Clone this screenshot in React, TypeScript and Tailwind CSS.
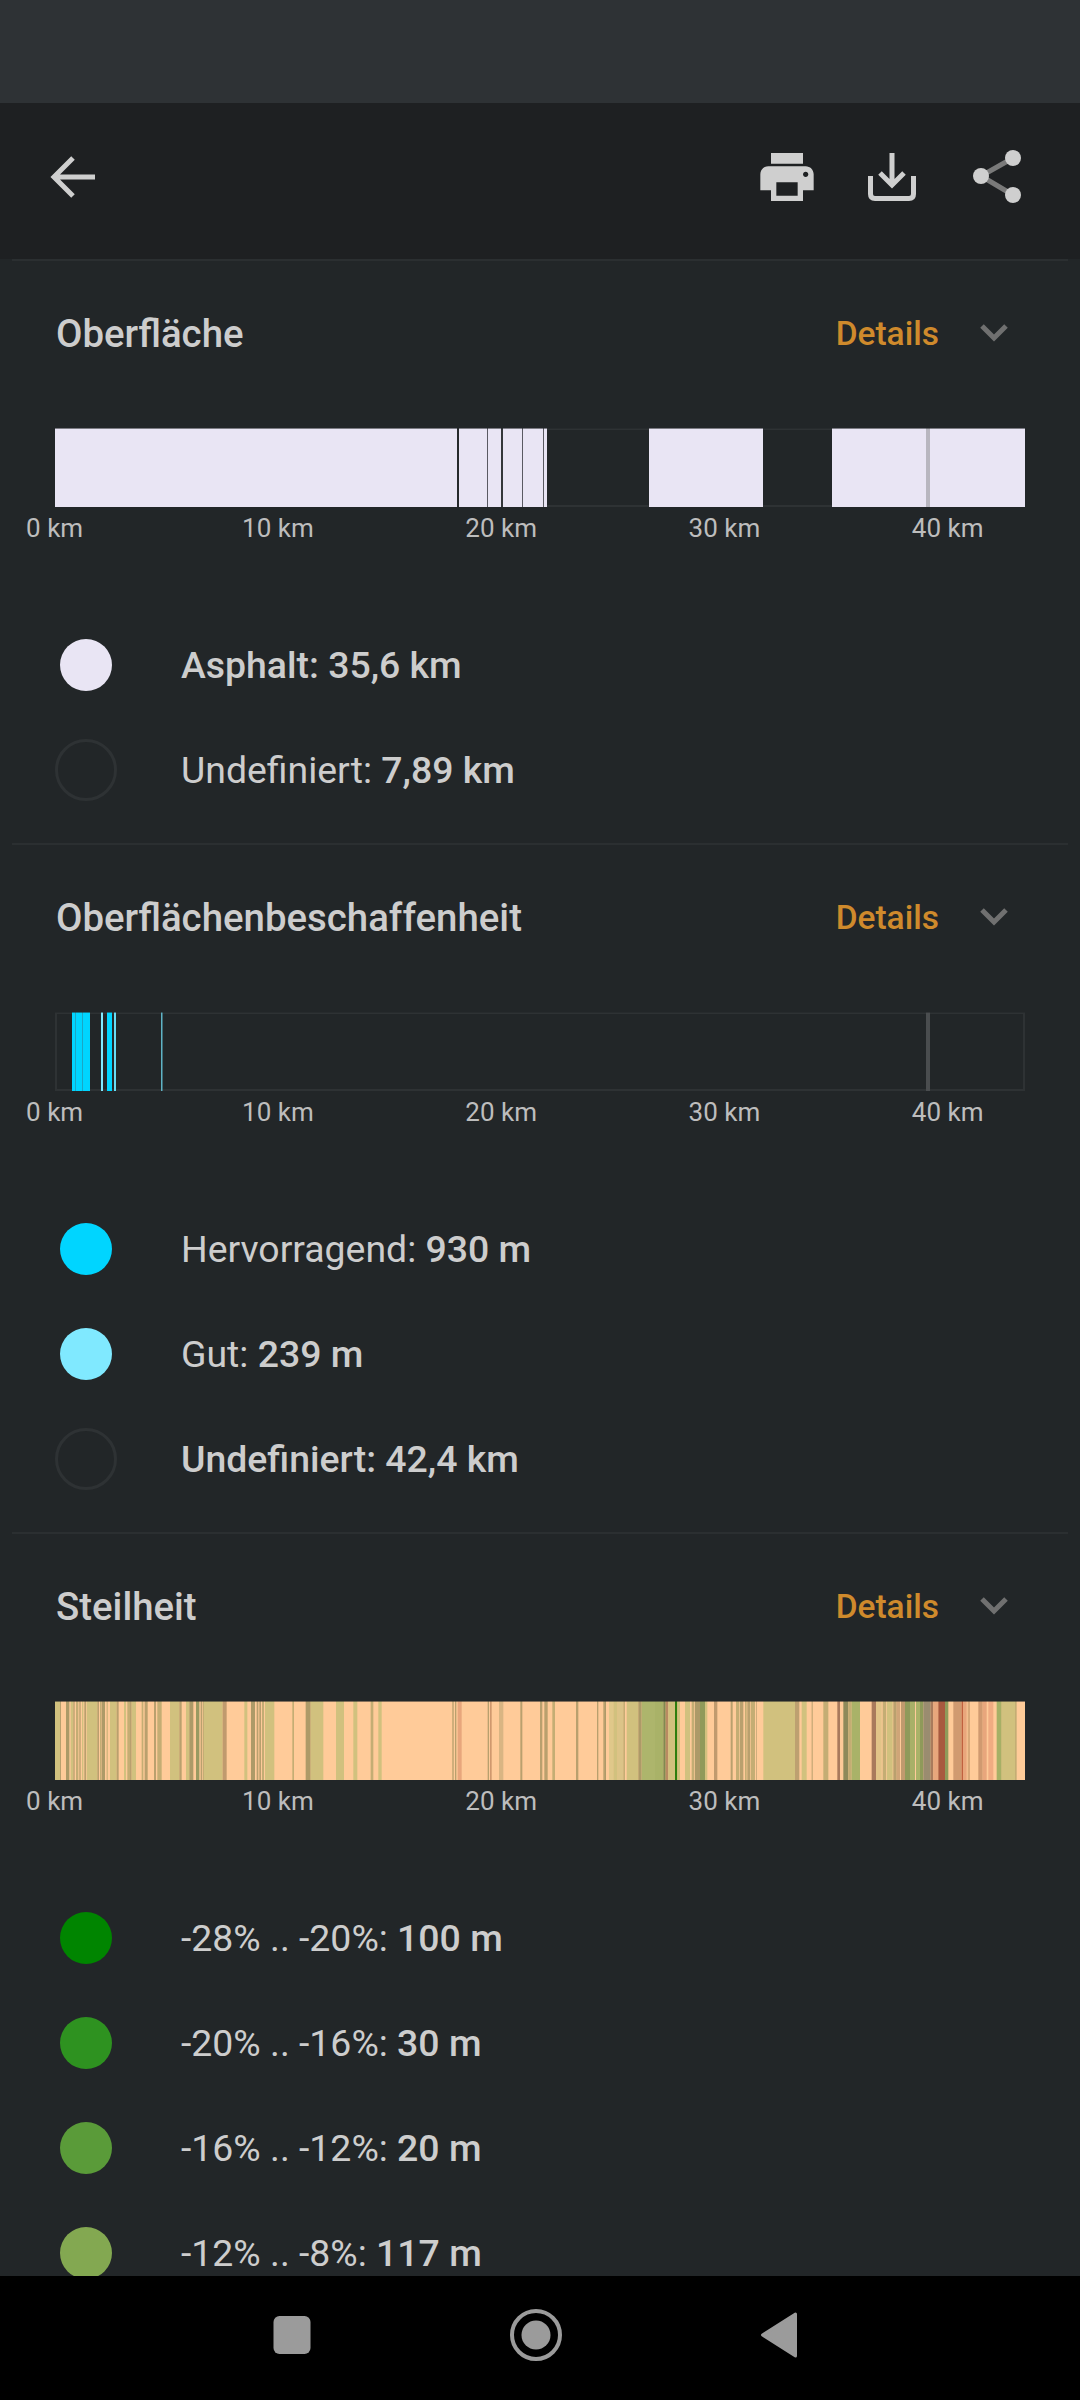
import React from "react";

type Seg = [number, number, string];

const LILAC = "#e9e5f4";
const PEACH = "#ffcb99";
const KHAKI = "#d1c17e";
const TAN = "#b9a06e";
const LTAN = "#c4ad74";
const DTAN = "#ad9a68";
const SALM = "#e8a67c";
const OLIVE = "#a9b268";
const DOLV = "#8f9a5a";
const BROWN = "#a97a5c";
const RED = "#a8593f";

const surface: Seg[] = [
  [0, 492, LILAC],
  [402, 404, "#26292b"],
  [432, 433, "#5a5a62"],
  [446, 448, "#34373a"],
  [467, 468, "#5a5a62"],
  [488, 489, "#5a5a62"],
  [594, 708, LILAC],
  [777, 970, LILAC],
  [871, 875, "#b8b6bf"],
];

const quality: Seg[] = [
  [17, 35, "#00d5ff"],
  [20, 21, "#1ba6c4"],
  [27, 28, "#1ba6c4"],
  [46, 48, "#80e9ff"],
  [52, 57, "#00d5ff"],
  [59, 61, "#66ddf5"],
  [106, 107.5, "#5fb3c6"],
  [871, 875, "#4a4d4f"],
];

// bar coordinates taken from three crops at 3x, so x = offset + zx / 3 - 55
const crop = (offset: number, list: Seg[]): Seg[] =>
  list.map(([a, b, c]) => [offset + a / 3 - 55, offset + b / 3 - 55, c] as Seg);

const steep: Seg[] = [
  [0, 970, PEACH],
  ...crop(50, [
    [15, 30, KHAKI], [30, 33, TAN], [48, 58, DTAN], [62, 70, KHAKI], [70, 74, TAN], [78, 85, LTAN], [88, 92, TAN], [96, 100, KHAKI],
    [103, 108, TAN], [110, 142, KHAKI], [142, 147, TAN], [150, 154, LTAN], [155, 165, DTAN], [170, 173, LTAN], [180, 200, KHAKI], [200, 206, TAN],
    [222, 228, KHAKI], [232, 240, LTAN], [240, 245, TAN], [245, 258, KHAKI], [275, 280, LTAN], [284, 293, TAN], [312, 318, TAN], [322, 335, LTAN],
    [360, 388, KHAKI], [388, 395, TAN], [408, 418, KHAKI], [418, 430, DTAN], [438, 448, "#9a9a62"], [452, 456, TAN], [458, 462, LTAN], [462, 518, KHAKI],
    [518, 530, "#c09a6e"], [583, 592, KHAKI], [603, 615, DTAN], [620, 625, TAN], [628, 633, TAN], [636, 642, LTAN], [645, 673, KHAKI], [727, 732, LTAN],
    [767, 782, DTAN], [782, 820, KHAKI], [858, 882, KHAKI], [910, 922, KHAKI], [962, 970, LTAN],
  ]),
  ...crop(375, [
    [10, 20, KHAKI], [232, 236, TAN], [240, 244, TAN], [248, 260, SALM], [338, 342, TAN], [345, 350, "#d0986e"], [372, 385, "#d9b583"], [436, 442, TAN],
    [495, 502, TAN], [508, 518, TAN], [532, 540, LTAN], [603, 610, TAN], [666, 670, TAN], [685, 690, TAN], [690, 693, DTAN], [702, 715, "#e0c88a"],
    [715, 728, KHAKI], [728, 745, "#dcc488"], [745, 750, LTAN], [755, 790, KHAKI], [790, 800, DTAN], [800, 840, "#adb56c"], [840, 865, OLIVE], [865, 872, "#7f8a50"],
    [872, 880, "#b88a62"], [880, 900, KHAKI], [900, 907, "#2d7e0e"], [907, 915, KHAKI], [930, 945, KHAKI], [950, 958, LTAN], [960, 975, DTAN], [975, 990, TAN],
  ]),
  ...crop(700, [
    [0, 15, DOLV], [15, 22, KHAKI], [42, 52, "#c09a6e"], [92, 98, TAN], [108, 118, LTAN], [120, 130, TAN], [135, 140, LTAN], [142, 150, TAN],
    [152, 165, LTAN], [168, 170, TAN], [190, 285, KHAKI], [285, 298, "#bda070"], [305, 320, KHAKI], [335, 338, TAN], [370, 385, LTAN], [412, 420, BROWN],
    [430, 445, "#8f8a5a"], [445, 455, LTAN], [455, 480, OLIVE], [515, 528, BROWN], [528, 545, "#e2c488"], [548, 558, LTAN], [560, 578, KHAKI], [580, 590, TAN],
    [590, 600, "#cfa578"], [603, 615, "#c09a6e"], [615, 630, DOLV], [630, 645, "#a8b068"], [648, 660, OLIVE], [660, 670, DOLV], [670, 692, "#9a8c70"], [692, 700, BROWN],
    [700, 715, SALM], [715, 735, RED], [735, 745, DOLV], [760, 785, "#d09a70"], [785, 790, "#c0613f"], [790, 800, SALM], [803, 810, "#d8a878"], [835, 848, "#d09a70"],
    [848, 860, SALM], [865, 880, "#f0ac82"], [890, 905, "#a6b066"], [905, 945, KHAKI], [945, 950, LTAN], [970, 975, PEACH],
  ]),
];

function StripBar({ segs }: { segs: Seg[] }) {
  return (
    <svg width="970" height="79" viewBox="0 0 970 79" className="ml-[55px] block">
      <rect x="1" y="1" width="968" height="77" fill="none" stroke="#2e3234" strokeWidth="2" />
      {segs.map(([a, b, c], i) => (
        <rect key={i} x={a} y="0" width={b - a} height="79" fill={c} />
      ))}
      <rect x="0" y="0" width="970" height="1" fill="#222628" opacity="0.55" />
    </svg>
  );
}

function Axis() {
  return (
    <div className="ml-[-57px] mt-[7px] flex text-[26px] leading-[28px] text-[#bdbdbd]">
      {["0 km", "10 km", "20 km", "30 km", "40 km"].map((t) => (
        <div key={t} className="w-[223.25px] shrink-0 text-center">
          {t}
        </div>
      ))}
    </div>
  );
}

function LegendRow({ color, label, value, strong }: { color?: string; label: string; value: string; strong?: boolean }) {
  return (
    <div className="flex h-[105px] items-center pl-[55px]">
      <div className="flex h-[62px] w-[62px] items-center justify-center">
        {color ? (
          <div className="h-[52px] w-[52px] rounded-full" style={{ backgroundColor: color }} />
        ) : (
          <div className="h-[62px] w-[62px] rounded-full border-[3px] border-[#2e3234]" />
        )}
      </div>
      <div className={`ml-[64px] text-[37.4px] leading-[44px] text-[#cdcdcd] ${strong ? "font-medium" : ""}`}>
        {label} <span className="font-medium">{value}</span>
      </div>
    </div>
  );
}

function Section({ title, segs, children }: { title: string; segs: Seg[]; children: React.ReactNode }) {
  return (
    <div>
      <div className="mx-3 h-[2px] bg-[#2b2f31]" />
      <div className="mt-[48px] flex h-[48px] items-center justify-between pl-[56px] pr-[70px]">
        <div className="pt-[2px] text-[38.4px] font-medium text-[#cdcdcd]">{title}</div>
        <div className="flex items-center gap-[39px]">
          <div className="pt-[2px] text-[33.5px] font-medium text-[#cf8a2c]">Details</div>
          <svg width="32" height="20" viewBox="0 0 32 20">
            <path d="M4 3 L16 15 L28 3" fill="none" stroke="#707070" strokeWidth="5" />
          </svg>
        </div>
      </div>
      <div className="mt-[71px]">
        <StripBar segs={segs} />
      </div>
      <Axis />
      <div className="mt-[70px] pb-[21px]">{children}</div>
    </div>
  );
}

export default function App() {
  return (
    <div className="flex h-[2400px] w-[1080px] flex-col overflow-hidden bg-[#222628] font-['Roboto',sans-serif]">
      <div className="h-[103px] shrink-0 bg-[#2e3235]" />

      <div className="flex h-[156px] shrink-0 items-start justify-between bg-[#1e2022] pl-[42px] pr-[51px] pt-[42px]">
        <svg width="64" height="64" viewBox="0 0 64 64">
          <path d="M31 13 L12 32 L31 51 M12 32 H53" fill="none" stroke="#cfcfcf" strokeWidth="5" />
        </svg>
        <div className="flex gap-[41px]">
          <svg width="64" height="64" viewBox="0 0 24 24">
            <path
              fill="#cfcfcf"
              d="M19 8H5c-1.66 0-3 1.34-3 3v6h4v4h12v-4h4v-6c0-1.66-1.34-3-3-3zm-3 11H8v-5h8v5zm3-7c-.55 0-1-.45-1-1s.45-1 1-1 1 .45 1 1-.45 1-1 1zm-1-9H6v4h12V3z"
            />
          </svg>
          <svg width="64" height="64" viewBox="0 0 64 64">
            <path d="M32 8 V40 M20 28 L32 40 L44 28" fill="none" stroke="#cfcfcf" strokeWidth="5" />
            <path d="M10.5 31 V49 Q10.5 53.5 15 53.5 H49 Q53.5 53.5 53.5 49 V31" fill="none" stroke="#cfcfcf" strokeWidth="5" />
          </svg>
          <svg width="64" height="64" viewBox="0 0 64 64">
            <path d="M48 13 L16 31 L48 50" fill="none" stroke="#7a7a7a" strokeWidth="5" />
            <circle cx="48" cy="13" r="8" fill="#cfcfcf" />
            <circle cx="16" cy="31" r="8" fill="#cfcfcf" />
            <circle cx="48" cy="50" r="8" fill="#cfcfcf" />
          </svg>
        </div>
      </div>

      <div className="min-h-0 flex-1 overflow-hidden">
        <Section title="Oberfläche" segs={surface}>
          <LegendRow color={LILAC} label="Asphalt:" value="35,6 km" strong />
          <LegendRow label="Undefiniert:" value="7,89 km" />
        </Section>
        <Section title="Oberflächenbeschaffenheit" segs={quality}>
          <LegendRow color="#00d5ff" label="Hervorragend:" value="930 m" />
          <LegendRow color="#80e9ff" label="Gut:" value="239 m" />
          <LegendRow label="Undefiniert:" value="42,4 km" strong />
        </Section>
        <Section title="Steilheit" segs={steep}>
          <LegendRow color="#008500" label="-28% .. -20%:" value="100 m" />
          <LegendRow color="#2e9220" label="-20% .. -16%:" value="30 m" />
          <LegendRow color="#5a9b39" label="-16% .. -12%:" value="20 m" />
          <LegendRow color="#83a851" label="-12% .. -8%:" value="117 m" />
        </Section>
      </div>

      <div className="flex h-[124px] shrink-0 items-center gap-[192px] bg-black pb-[6px] pl-[266px]">
        <svg width="52" height="52" viewBox="0 0 52 52">
          <rect x="7.5" y="7" width="37" height="38" rx="6" fill="#9b9b9b" />
        </svg>
        <svg width="52" height="52" viewBox="0 0 52 52">
          <circle cx="26" cy="26" r="24" fill="none" stroke="#9b9b9b" strokeWidth="4" />
          <circle cx="26" cy="26" r="14.5" fill="#9b9b9b" />
        </svg>
        <svg width="52" height="52" viewBox="0 0 52 52">
          <path d="M41.5 5 V47 L8.5 26 Z" fill="#9b9b9b" stroke="#9b9b9b" strokeWidth="3" strokeLinejoin="round" />
        </svg>
      </div>
    </div>
  );
}
